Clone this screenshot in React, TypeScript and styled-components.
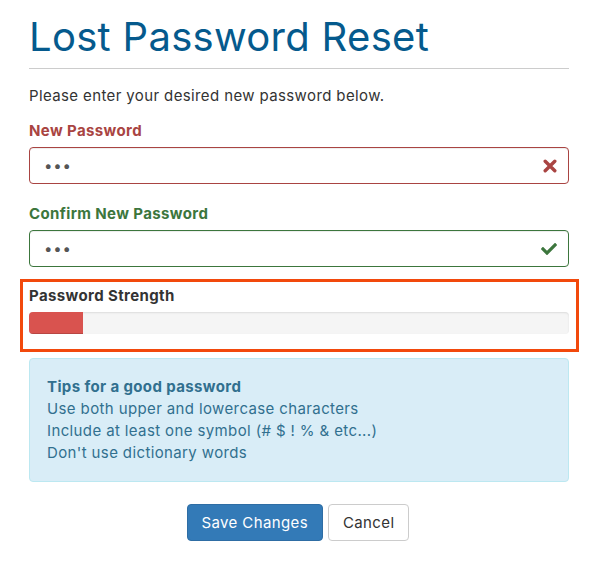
import React from "react";
import styled, { createGlobalStyle } from "styled-components";
import { FaCheck } from "react-icons/fa";

const Global = createGlobalStyle`
  html, body { margin: 0; padding: 0; background: #fff; }
  body { font-family: Inter, "Noto Sans", sans-serif; color: #333; letter-spacing: 0.38px; }
  * { box-sizing: border-box; }
`;

const Page = styled.div`
  width: 540px;
  margin-left: 29px;
  padding-top: 15px;
`;

const Title = styled.h1`
  margin: 0;
  font-size: 40px;
  line-height: 44px;
  font-weight: 400;
  color: #055a8d;
  letter-spacing: 0.3px;
`;

const Rule = styled.hr`
  margin: 9px 0 0;
  border: 0;
  border-top: 1px solid #cccccc;
`;

const Intro = styled.p`
  margin: 16px 0 13px;
  font-size: 15px;
  line-height: 22px;
  color: #333;
`;

type Tone = "error" | "success" | "plain";
const toneColor: Record<Tone, string> = {
  error: "#a94442",
  success: "#3c763d",
  plain: "#333333",
};

const Group = styled.div<{ $last?: boolean }>`
  margin-bottom: ${(p) => (p.$last ? "12px" : "19px")};
`;

const Label = styled.label<{ $tone: Tone }>`
  display: block;
  font-size: 15px;
  line-height: 21px;
  font-weight: 700;
  margin-bottom: 6px;
  color: ${(p) => toneColor[p.$tone]};
`;

const InputWrap = styled.div`
  position: relative;
`;

const Input = styled.input<{ $tone: Tone }>`
  display: block;
  width: 100%;
  height: 37px;
  padding: 0 40px 0 14px;
  font-family: Inter, sans-serif;
  font-size: 15px;
  color: #555;
  background: #fff;
  border: 1px solid ${(p) => toneColor[p.$tone]};
  border-radius: 4px;
  box-shadow: inset 0 1px 1px rgba(0, 0, 0, 0.075);
  outline: none;
  letter-spacing: 0.8px;
`;

const Feedback = styled.span<{ $tone: Tone }>`
  position: absolute;
  right: 12px;
  top: 50%;
  transform: translateY(-50%);
  display: flex;
  color: ${(p) => toneColor[p.$tone]};
`;

const Highlight = styled.div`
  margin: 0 -10px 0 -9px;
  padding: 3px 7px 15px 6px;
  border: 3px solid #f2490c;
`;

const Progress = styled.div`
  height: 22px;
  background: #f5f5f5;
  border-radius: 4px;
  overflow: hidden;
  box-shadow: inset 0 1px 2px rgba(0, 0, 0, 0.1);
`;

const Bar = styled.div`
  height: 100%;
  background: #d9534f;
  box-shadow: inset 0 -1px 0 rgba(0, 0, 0, 0.15);
`;

const Alert = styled.div`
  margin-top: 6px;
  padding: 17px;
  background: #d9edf7;
  border: 1px solid #bce8f1;
  border-radius: 4px;
  color: #31708f;
  font-size: 15px;
  line-height: 22px;
`;

const AlertTitle = styled.div`
  font-weight: 700;
`;

const Actions = styled.div`
  margin-top: 22px;
  display: flex;
  justify-content: center;
  gap: 5px;
  padding-right: 2px;
`;

const Button = styled.button<{ $primary?: boolean }>`
  height: 37px;
  padding: 0 14px;
  font-family: Inter, sans-serif;
  font-size: 15px;
  letter-spacing: 0.38px;
  border-radius: 4px;
  cursor: pointer;
  color: ${(p) => (p.$primary ? "#fff" : "#333")};
  background: ${(p) => (p.$primary ? "#337ab7" : "#fff")};
  border: 1px solid ${(p) => (p.$primary ? "#2e6da4" : "#ccc")};
`;

const TimesIcon = () => (
  <svg width="14" height="14" viewBox="0 0 14 14" aria-hidden="true">
    <path
      d="M2.2 2.2 L11.8 11.8 M11.8 2.2 L2.2 11.8"
      stroke="currentColor"
      strokeWidth="3.4"
      strokeLinecap="round"
      fill="none"
    />
  </svg>
);

const tips = [
  "Use both upper and lowercase characters",
  "Include at least one symbol (# $ ! % & etc...)",
  "Don't use dictionary words",
];

export default function App() {
  const strength = 10;
  return (
    <>
      <Global />
      <Page>
        <Title>Lost Password Reset</Title>
        <Rule />
        <Intro>Please enter your desired new password below.</Intro>

        <Group>
          <Label $tone="error">New Password</Label>
          <InputWrap>
            <Input $tone="error" type="password" defaultValue="abc" readOnly />
            <Feedback $tone="error">
              <TimesIcon />
            </Feedback>
          </InputWrap>
        </Group>

        <Group $last>
          <Label $tone="success">Confirm New Password</Label>
          <InputWrap>
            <Input $tone="success" type="password" defaultValue="abc" readOnly />
            <Feedback $tone="success">
              <FaCheck size={16} />
            </Feedback>
          </InputWrap>
        </Group>

        <Highlight>
          <Label $tone="plain">Password Strength</Label>
          <Progress>
            <Bar style={{ width: `${strength}%` }} />
          </Progress>
        </Highlight>

        <Alert>
          <AlertTitle>Tips for a good password</AlertTitle>
          {tips.map((t) => (
            <div key={t}>{t}</div>
          ))}
        </Alert>

        <Actions>
          <Button $primary>Save Changes</Button>
          <Button>Cancel</Button>
        </Actions>
      </Page>
    </>
  );
}
